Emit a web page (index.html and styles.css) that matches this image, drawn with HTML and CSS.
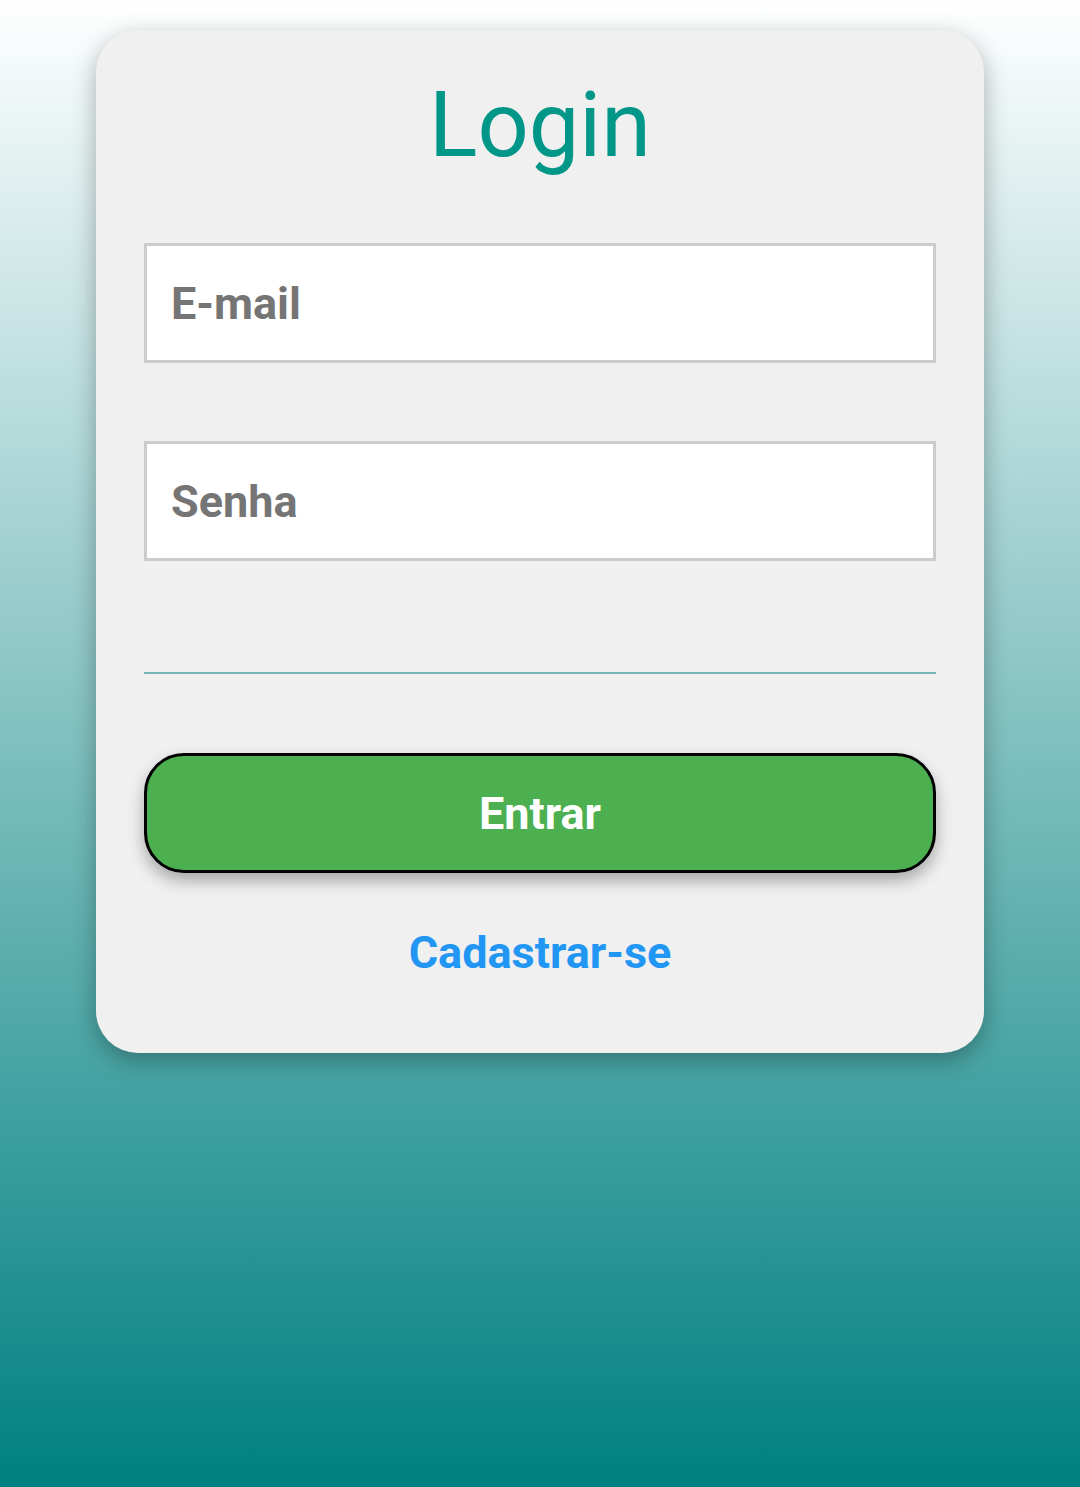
FILE: index.html
```html
<!DOCTYPE html>
<html lang="pt-BR">
<head>
<meta charset="utf-8">
<title>Login</title>
<link rel="stylesheet" href="styles.css">
</head>
<body>
<main class="page">
  <form class="card">
    <h1 class="title">Login</h1>
    <input class="field" type="email" placeholder="E-mail">
    <input class="field field-second" type="password" placeholder="Senha">
    <div class="divider"></div>
    <button class="btn" type="button">Entrar</button>
    <a class="link" href="#">Cadastrar-se</a>
  </form>
</main>
</body>
</html>
```
FILE: styles.css
```css
html, body {
  margin: 0;
  padding: 0;
}
body {
  min-height: 1487px;
  background: linear-gradient(to bottom, #ffffff 0%, #008080 100%);
  font-family: Roboto, "Liberation Sans", sans-serif;
}
.page {
  padding-top: 30px;
  display: flex;
  justify-content: center;
}
.card {
  width: 888px;
  box-sizing: border-box;
  background: #f0f0f0;
  border-radius: 42px;
  padding: 42px 48px 74px;
  box-shadow: 0 8px 24px rgba(0, 0, 0, 0.3);
  display: flex;
  flex-direction: column;
  align-items: stretch;
}
.title {
  margin: 0 0 63px;
  font-size: 90px;
  line-height: 108px;
  font-weight: 400;
  color: #009688;
  text-align: center;
}
.field {
  box-sizing: border-box;
  height: 120px;
  width: 100%;
  margin: 0;
  border: 3px solid #cccccc;
  background: #ffffff;
  padding: 0 24px;
  font-family: Roboto, "Liberation Sans", sans-serif;
  font-size: 45px;
  font-weight: 700;
  color: #333;
  outline: none;
  border-radius: 0;
}
.field::placeholder {
  color: #757575;
  font-weight: 700;
  opacity: 1;
}
.field-second {
  margin-top: 78px;
}
.divider {
  margin-top: 111px;
  border-bottom: 2px solid #7ab6b6;
}
.btn {
  margin-top: 79px;
  box-sizing: border-box;
  height: 120px;
  width: 100%;
  border: 3px solid #000000;
  border-radius: 40px;
  background: #4caf50;
  color: #ffffff;
  font-family: Roboto, "Liberation Sans", sans-serif;
  font-size: 45px;
  font-weight: 700;
  box-shadow: 0 8px 16px rgba(0, 0, 0, 0.3);
  cursor: pointer;
}
.link {
  margin-top: 53px;
  align-self: center;
  color: #2196f3;
  font-size: 45px;
  font-weight: 700;
  text-decoration: none;
}
```
